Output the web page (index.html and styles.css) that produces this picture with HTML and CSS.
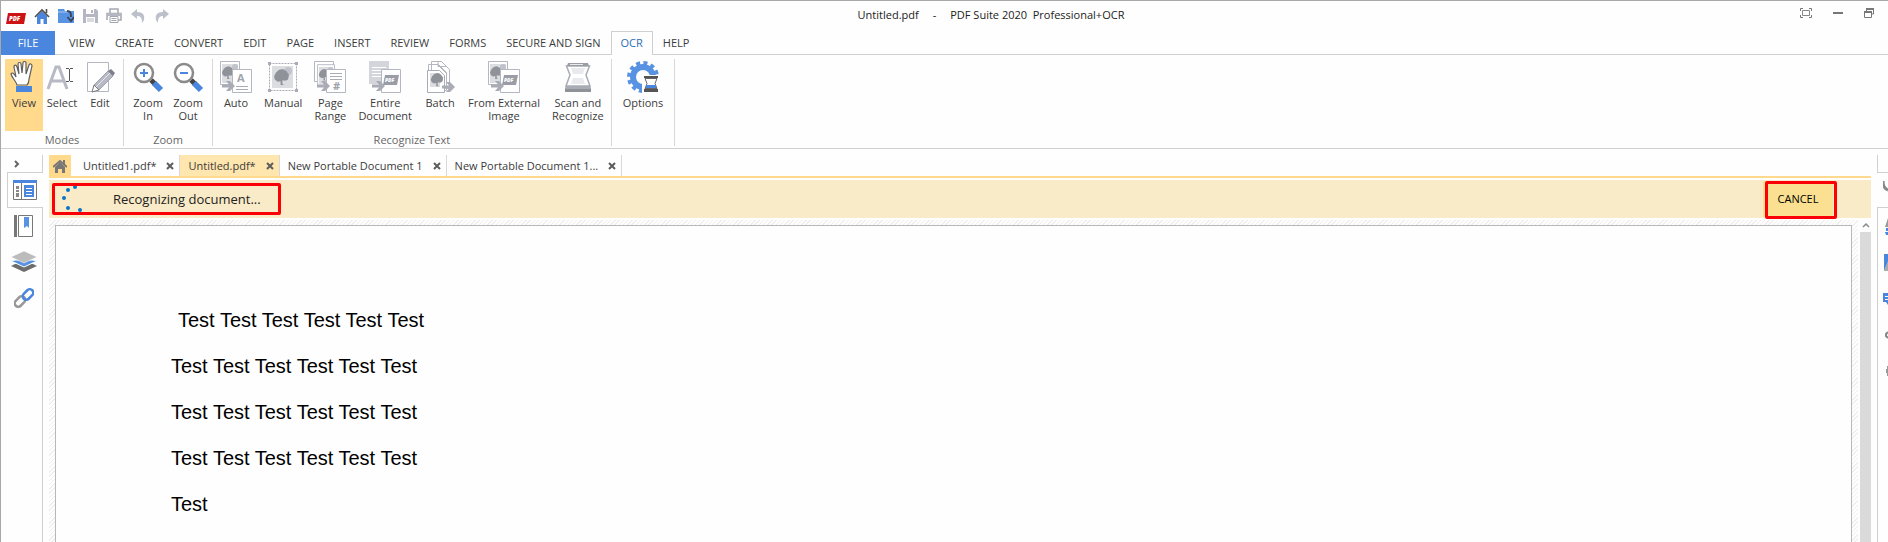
FILE: index.html
```html
<!DOCTYPE html>
<html lang="en">
<head>
    <meta charset="UTF-8">
    <meta name="viewport" content="width=device-width, initial-scale=1.0">
    <title>Untitled.pdf - PDF Suite 2020 Professional+OCR</title>
    <link rel="stylesheet" href="styles.css">
</head>
<body>

    <!-- shared icon parts -->
    <svg class="defs" width="0" height="0" aria-hidden="true">
        <symbol id="tree" viewBox="0 0 16 18">
            <path d="M7 17v-4l-3 .5-3-2L0 8l2-4 3-3 4-1 4 2 3 4-1 5-3 1.500-3-.5v4l2 1H5z" fill="#8f9299"/>
        </symbol>
        <symbol id="arrow" viewBox="0 0 13 10">
            <path d="M0 3.500h7L4 0h4l5 5-5 5H4l3-3.500H0z" fill="#a9acb5"/>
        </symbol>
        <symbol id="pdfpage" viewBox="0 0 20 24">
            <path d="M.5.5h19v23H.5z" fill="#fff" stroke="#b4b7c1"/>
            <path d="M4 6h14l-2 10H2z" fill="#9a9da6"/>
            <text x="4" y="13" class="pdf-mark">PDF</text>
        </symbol>
        <symbol id="picture" viewBox="0 0 20 24">
            <path d="M.5.5h19v23H.5z" fill="#fff" stroke="#b4b7c1"/>
            <path d="M2 3h16v19H2z" fill="#dcdde1"/>
            <circle cx="15" cy="6" r="3" fill="#c0c3cc"/>
            <use href="#tree" x="2" y="4" width="12" height="16"/>
        </symbol>
    </svg>

    <header class="titlebar">
        <div class="quick">
            <svg class="logo" width="20" height="12" viewBox="0 0 20 12">
                <path d="M2 1h18l-2 11H0z" fill="#cc1414"/>
                <text x="3" y="9" class="logo-text">PDF</text>
            </svg>
            <button class="quick-btn" aria-label="Home">
                <svg width="16" height="16" viewBox="0 0 16 16">
                    <path d="M3 8l5-5 5 5v8H9.500v-5h-3v5H3z" fill="#4a86dd"/>
                    <path d="M1 9l7-7 7 7M12.500 1v4" fill="none" stroke="#4e4e4e" stroke-width="1.600"/>
                </svg>
            </button>
            <button class="quick-btn" aria-label="Open">
                <svg width="16" height="16" viewBox="0 0 16 16">
                    <path d="M0 1h6l1 2h9v12H0z" fill="#5793e2"/>
                    <path d="M0 4h10" stroke="#a9c8f2"/>
                    <path d="M9 3c3 0 4 1 4 6" fill="none" stroke="#3c4453" stroke-width="1.800"/>
                    <path d="M9.500 9l3.500 4 3-4" fill="none" stroke="#3c4453" stroke-width="1.800"/>
                </svg>
            </button>
            <button class="quick-btn" aria-label="Save">
                <svg width="16" height="16" viewBox="0 0 16 16">
                    <path d="M1 1h13l2 2v12H1z" fill="#b4b6c1"/>
                    <path d="M4 1h8v5H4zM4 9h9v6H4z" fill="#fff"/>
                    <path d="M9 2h2v3H9zM5 10.500h7v1H5zM5 12.500h7v1H5z" fill="#b4b6c1"/>
                </svg>
            </button>
            <button class="quick-btn" aria-label="Print">
                <svg width="16" height="16" viewBox="0 0 16 16">
                    <path d="M4 5V1h8v4M1 12V5.500h14V12h-3" fill="none" stroke="#a6a8b1" stroke-width="1.500"/>
                    <path d="M1 5h14v3H1z" fill="#b4b6c1"/>
                    <path d="M4 8.500h8v6H4z" fill="#fff" stroke="#a6a8b1"/>
                    <path d="M5.500 10.500h5M5.500 12.500h5" stroke="#a6a8b1"/>
                </svg>
            </button>
            <button class="quick-btn" aria-label="Undo">
                <svg width="16" height="16" viewBox="0 0 16 16">
                    <path d="M1 6l6-5v3c6 0 8 3 7 8l-2 3c0-5-1-7-5-7v3z" fill="#bcc0ca"/>
                </svg>
            </button>
            <button class="quick-btn" aria-label="Redo">
                <svg width="16" height="16" viewBox="0 0 16 16">
                    <path d="M15 6L9 1v3C3 4 1 7 2 12l2 3c0-5 1-7 5-7v3z" fill="#bcc0ca"/>
                </svg>
            </button>
        </div>
        <h1 class="title"><span>Untitled.pdf</span><span>-</span><span>PDF Suite 2020&nbsp; Professional+OCR</span></h1>
        <div class="window-btns">
            <button aria-label="Full screen">
                <svg width="12" height="10" viewBox="0 0 12 10">
                    <path d="M.5 3V.5H3M9 .5h2.500V3M11.500 7v2.500H9M3 9.500H.5V7" fill="none" stroke="#777"/>
                    <path d="M2.500 2.500h7v5h-7z" fill="#fff" stroke="#888"/>
                </svg>
            </button>
            <button aria-label="Minimize">
                <svg width="10" height="10" viewBox="0 0 10 10"><path d="M0 4h10v2H0z" fill="#777"/></svg>
            </button>
            <button aria-label="Restore">
                <svg width="10" height="10" viewBox="0 0 10 10">
                    <path d="M2.500 3V1h7v5H8" fill="none" stroke="#777"/>
                    <path d="M2 0h8v2H2z" fill="#777"/>
                    <path d="M.5 4h7v5.500h-7z" fill="#fff" stroke="#777"/>
                    <path d="M0 3h8v2H0z" fill="#777"/>
                </svg>
            </button>
        </div>
    </header>

    <nav class="menu">
        <button class="file">FILE</button>
        <button>VIEW</button>
        <button>CREATE</button>
        <button>CONVERT</button>
        <button>EDIT</button>
        <button>PAGE</button>
        <button>INSERT</button>
        <button>REVIEW</button>
        <button>FORMS</button>
        <button>SECURE AND SIGN</button>
        <button class="active">OCR</button>
        <button>HELP</button>
    </nav>

    <section class="ribbon">
        <div class="group modes">
            <div class="tools">
                <button class="tool selected">
                    <svg width="32" height="32" viewBox="0 0 32 32">
                        <path d="M9 24c-1-4-5-7-6-11 1-2 3-1 5 3L6 6c0-2 2-3 3 0l2 7-1-10c0-2 3-2 3 0l1 9 1-10c0-2 3-2 3 0v11l3-9c1-2 3-1 3 1l-3 13c0 3-1 5-2 6z" fill="#fff" stroke="#5f5f5f" stroke-width="1.200"/>
                        <path d="M8 25h16v6H8z" fill="#4a86dd"/>
                    </svg>
                    View
                </button>
                <button class="tool">
                    <svg width="32" height="32" viewBox="0 0 32 32">
                        <path d="M2 28L10 6h3l8 22M5 20h13" fill="none" stroke="#b7bac4" stroke-width="3"/>
                        <path d="M20 7.500h3M24 7.500h3M23.500 8v12M20 20.500h3M24 20.500h3" stroke="#555"/>
                    </svg>
                    Select
                </button>
                <button class="tool">
                    <svg width="32" height="32" viewBox="0 0 32 32">
                        <path d="M3.500 1.500h21v29h-21z" fill="#fff" stroke="#b4b7c1"/>
                        <path d="M10 24L24 10l5 5-14 14z" fill="#b7bac4" stroke="#9fa2ac"/>
                        <path d="M12 26l14-14" stroke="#e8e9ed"/>
                        <path d="M24 10l3-2 4 4-2 3z" fill="#7d8088"/>
                        <path d="M10 24l5 5-7 2z" fill="#fff" stroke="#777"/>
                    </svg>
                    Edit
                </button>
            </div>
            <div class="caption">Modes</div>
        </div>

        <div class="group zoom">
            <div class="tools">
                <button class="tool">
                    <svg width="32" height="32" viewBox="0 0 32 32">
                        <path d="M19 19l4 4" stroke="#444" stroke-width="5"/>
                        <path d="M22 22l7 7" stroke="#4a86dd" stroke-width="6"/>
                        <circle cx="12" cy="12" r="9" fill="#fff" stroke="#8a8a8a" stroke-width="2.500"/>
                        <path d="M8 12h8M12 8v8" stroke="#4a86dd" stroke-width="2"/>
                    </svg>
                    Zoom<br>In
                </button>
                <button class="tool">
                    <svg width="32" height="32" viewBox="0 0 32 32">
                        <path d="M19 19l4 4" stroke="#444" stroke-width="5"/>
                        <path d="M22 22l7 7" stroke="#4a86dd" stroke-width="6"/>
                        <circle cx="12" cy="12" r="9" fill="#fff" stroke="#8a8a8a" stroke-width="2.500"/>
                        <path d="M8 12h8" stroke="#4a86dd" stroke-width="2"/>
                    </svg>
                    Zoom<br>Out
                </button>
            </div>
            <div class="caption">Zoom</div>
        </div>

        <div class="group recognize">
            <div class="tools">
                <button class="tool">
                    <svg width="32" height="32" viewBox="0 0 32 32">
                        <use href="#picture" x="0" y="0" width="20" height="24"/>
                        <path d="M12.500 8.500h19v23h-19z" fill="#fff" stroke="#b4b7c1"/>
                        <path d="M16 25.500h12M16 28.500h12" stroke="#a9acb5"/>
                        <text x="17" y="21" class="icon-letter">A</text>
                        <use href="#arrow" x="2" y="20" width="13" height="10"/>
                    </svg>
                    Auto
                </button>
                <button class="tool">
                    <svg width="32" height="32" viewBox="0 0 32 32">
                        <path d="M2.500 2.500h27v27h-27z" fill="none" stroke="#a9acb5" stroke-dasharray="2 1"/>
                        <path d="M1 1h3v3H1zM28 1h3v3h-3zM1 28h3v3H1zM28 28h3v3h-3z" fill="#a9acb5"/>
                        <path d="M5 5h21v22H5z" fill="#dcdde1"/>
                        <circle cx="21" cy="10" r="4" fill="#c0c3cc"/>
                        <use href="#tree" x="7" y="8" width="15" height="17"/>
                    </svg>
                    Manual
                </button>
                <button class="tool">
                    <svg width="32" height="32" viewBox="0 0 32 32">
                        <path d="M.5.5h19v20H.5z" fill="#fff" stroke="#b4b7c1"/>
                        <use href="#picture" x="3" y="3" width="18" height="22"/>
                        <path d="M12.500 8.500h19v23h-19z" fill="#fff" stroke="#b4b7c1"/>
                        <path d="M16 12.500h12M16 15.500h12M16 18.500h12" stroke="#a9acb5"/>
                        <text x="19" y="29" class="icon-letter">#</text>
                        <use href="#arrow" x="3" y="20" width="13" height="10"/>
                    </svg>
                    Page<br>Range
                </button>
                <button class="tool">
                    <svg width="32" height="32" viewBox="0 0 32 32">
                        <path d="M0 0h20v23H0z" fill="#d3d5db"/>
                        <path d="M3 6.500h14M3 9.500h14M3 12.500h9M3 15.500h9" stroke="#fff"/>
                        <use href="#pdfpage" x="12" y="8" width="20" height="24"/>
                        <use href="#arrow" x="3" y="20" width="13" height="10"/>
                    </svg>
                    Entire<br>Document
                </button>
                <button class="tool">
                    <svg width="32" height="32" viewBox="0 0 32 32">
                        <path d="M7.500.5h10l8 8v19h-18zM4.500 3.500h10l8 8v18h-18z" fill="#fff" stroke="#b4b7c1"/>
                        <path d="M14 .5v5h9M14 4l8 8" fill="none" stroke="#b4b7c1"/>
                        <path d="M3.500 9.500h12l5 5v17h-17z" fill="#fff" stroke="#a9acb5"/>
                        <path d="M6 12h10v14H6z" fill="#dcdde1"/>
                        <use href="#tree" x="6" y="12" width="14" height="14"/>
                        <use href="#arrow" x="18" y="21" width="13" height="10"/>
                    </svg>
                    Batch
                </button>
                <button class="tool">
                    <svg width="32" height="32" viewBox="0 0 32 32">
                        <use href="#picture" x="0" y="0" width="20" height="24"/>
                        <use href="#pdfpage" x="12" y="8" width="20" height="24"/>
                        <use href="#arrow" x="3" y="20" width="13" height="10"/>
                    </svg>
                    From External<br>Image
                </button>
                <button class="tool">
                    <svg width="32" height="32" viewBox="0 0 32 32">
                        <path d="M4.500 5h23L24 14l4 11H4l4-11z" fill="#fff" stroke="#a9acb5" stroke-width="1.500"/>
                        <path d="M9 7h14l-2 6H11zM11 17h10l2 6H9z" fill="#e9eaed"/>
                        <path d="M6 2h20l1 3H5z" fill="#9a9da6"/>
                        <path d="M8 3.500h13" stroke="#e9eaed"/>
                        <path d="M4 25h24l1 2v4H3v-4z" fill="#a9acb5"/>
                        <path d="M3 28h26v3H3z" fill="#8f9299"/>
                    </svg>
                    Scan and<br>Recognize
                </button>
            </div>
            <div class="caption">Recognize Text</div>
        </div>

        <div class="group options">
            <div class="tools">
                <button class="tool">
                    <svg width="32" height="32" viewBox="0 0 32 32">
                        <circle cx="16" cy="16" r="14" fill="none" stroke="#5793e2" stroke-width="4" stroke-dasharray="4 3.330"/>
                        <circle cx="16" cy="16" r="10" fill="none" stroke="#5793e2" stroke-width="6"/>
                        <path d="M15 14h17v18H15z" fill="#fff"/>
                        <path d="M18 17.500h12l-2 5 2 5H18l2-5z" fill="#fff" stroke="#666"/>
                        <path d="M19 24h10v3H19z" fill="#4a86dd"/>
                        <path d="M17 15h14v2H17zM17 28h14v3H17z" fill="#555"/>
                    </svg>
                    Options
                </button>
            </div>
        </div>
    </section>

    <div class="workspace">
        <aside class="sidebar">
            <button class="expand" aria-label="Expand panel">
                <svg width="6" height="8" viewBox="0 0 6 8"><path d="M1 1l3 3-3 3" fill="none" stroke="#666" stroke-width="2"/></svg>
            </button>
            <button class="side-btn active" aria-label="Pages">
                <svg width="24" height="20" viewBox="0 0 24 20">
                    <path d="M.5.5h23v19H.5z" fill="#fff" stroke="#777"/>
                    <path d="M0 0h24v3H0z" fill="#4a86dd"/>
                    <path d="M8.500 3v16" stroke="#777"/>
                    <path d="M3 6h3v3H3zM3 10h3v2H3zM3 13h3v4H3z" fill="#888"/>
                    <path d="M11 5h10v12H11z" fill="#4a86dd"/>
                    <path d="M13 8.500h6M13 11.500h6M13 14.500h6" stroke="#fff"/>
                </svg>
            </button>
            <button class="side-btn" aria-label="Bookmarks">
                <svg width="20" height="22" viewBox="0 0 20 22">
                    <path d="M0 0h3v22H0z" fill="#777"/>
                    <path d="M4.500.5h14v21h-14z" fill="#fff" stroke="#777"/>
                    <path d="M10 2h5v11l-2-2-3 2z" fill="#5793e2"/>
                </svg>
            </button>
            <button class="side-btn" aria-label="Layers">
                <svg width="26" height="22" viewBox="0 0 26 22">
                    <path d="M0 15l4-2h18l4 2-13 6z" fill="#6d6d6d"/>
                    <path d="M0 10l4-1h18l4 1-13 6z" fill="#5793e2" stroke="#fff"/>
                    <path d="M0 6l13-6 13 6-13 6z" fill="#bcbcbc" stroke="#fff" stroke-width=".5"/>
                </svg>
            </button>
            <button class="side-btn" aria-label="Attachments">
                <svg width="20" height="20" viewBox="0 0 20 20">
                    <rect x="0" y="10" width="12" height="7" rx="3.500" transform="rotate(-45 6 13.500)" fill="none" stroke="#999" stroke-width="2.500"/>
                    <rect x="8" y="3" width="12" height="7" rx="3.500" transform="rotate(-45 14 6.500)" fill="none" stroke="#4a86dd" stroke-width="2.500"/>
                </svg>
            </button>
        </aside>

        <main class="main">
            <div class="doc-tabs">
                <button class="home-tab" aria-label="Start page">
                    <svg width="14" height="14" viewBox="0 0 14 14">
                        <path d="M2 8l5-5 5 5v6H9v-4H5v4H2z" fill="#777"/>
                        <path d="M0 8l7-6 7 6M11 1v4" fill="none" stroke="#777" stroke-width="2"/>
                    </svg>
                </button>
                <div class="doc-tab"><span>Untitled1.pdf*</span><button class="close" aria-label="Close"><svg width="8" height="8" viewBox="0 0 8 8"><path d="M1 1l6 6M7 1L1 7"/></svg></button></div>
                <div class="doc-tab active"><span>Untitled.pdf*</span><button class="close" aria-label="Close"><svg width="8" height="8" viewBox="0 0 8 8"><path d="M1 1l6 6M7 1L1 7"/></svg></button></div>
                <div class="doc-tab"><span>New Portable Document 1</span><button class="close" aria-label="Close"><svg width="8" height="8" viewBox="0 0 8 8"><path d="M1 1l6 6M7 1L1 7"/></svg></button></div>
                <div class="doc-tab"><span>New Portable Document 1...</span><button class="close" aria-label="Close"><svg width="8" height="8" viewBox="0 0 8 8"><path d="M1 1l6 6M7 1L1 7"/></svg></button></div>
            </div>

            <div class="progress">
                <div class="status">
                    <svg width="24" height="26" viewBox="0 0 24 26" fill="#0a74c4">
                        <circle cx="14" cy="1" r="2"/>
                        <circle cx="7" cy="4" r="2"/>
                        <circle cx="3" cy="12" r="2"/>
                        <circle cx="7" cy="22" r="2"/>
                        <circle cx="19" cy="24" r="2"/>
                    </svg>
                    <span>Recognizing document...</span>
                </div>
                <button class="cancel">CANCEL</button>
            </div>

            <div class="viewer">
                <div class="canvas">
                    <article class="paper">
                        <p class="indent">Test Test Test Test Test Test</p>
                        <p>Test Test Test Test Test Test</p>
                        <p>Test Test Test Test Test Test</p>
                        <p>Test Test Test Test Test Test</p>
                        <p>Test</p>
                    </article>
                </div>
                <div class="scrollbar">
                    <svg width="11" height="12" viewBox="0 0 11 12"><path d="M3 7l3-3 3 3" fill="none" stroke="#888" stroke-width="1.500"/></svg>
                    <div class="thumb"></div>
                </div>
            </div>
        </main>

        <aside class="right-panel">
            <div class="right-top"></div>
            <div class="right-active">
                <svg width="5" height="12" viewBox="0 0 5 12"><path d="M0 1c0 5 2 8 5 9" fill="none" stroke="#888" stroke-width="3"/></svg>
            </div>
            <div class="right-list">
                <div class="right-item"><svg width="4" height="18" viewBox="0 0 4 18"><path d="M4 0L1 9h3z" fill="#999"/><path d="M2 10h2v3H2zM1 14h3v3H2z" fill="#4a86dd"/></svg></div>
                <div class="right-item"><svg width="4" height="18" viewBox="0 0 4 18"><path d="M0 0h4v8L0 17z" fill="#4a86dd"/><path d="M4 7v10H0z" fill="#aaa"/></svg></div>
                <div class="right-item"><svg width="5" height="12" viewBox="0 0 5 12"><path d="M0 0h5v12L3 9H0z" fill="#4a86dd"/><path d="M2 3.500h3M2 6.500h3" stroke="#fff"/></svg></div>
                <div class="right-item"><svg width="3" height="8" viewBox="0 0 3 8"><path d="M3 1L1 3v2l2 2" fill="none" stroke="#888" stroke-width="2"/></svg></div>
                <div class="right-item"><svg width="2" height="10" viewBox="0 0 2 10"><path d="M1 0h1v10H1V7H0V3h1z" fill="#999"/></svg></div>
            </div>
        </aside>
    </div>

</body>
</html>
```

FILE: styles.css
```css
* {
    box-sizing: border-box;
}

body {
    margin: 0;
    height: 100vh;
    display: flex;
    flex-direction: column;
    overflow: hidden;
    border-top: 1px solid #a8a8a8;
    border-left: 1px solid #a8a8a8;
    background: #fefefe;
    font-family: "Open Sans", "Noto Sans", sans-serif;
    font-size: 11px;
    color: #3c3c3c;
}

button {
    margin: 0;
    padding: 0;
    border: none;
    background: none;
    font: inherit;
    color: inherit;
    cursor: pointer;
}

svg {
    display: block;
    flex: none;
}

.defs {
    position: absolute;
}

/* Title bar */
.titlebar {
    display: flex;
    justify-content: space-between;
    align-items: center;
    height: 30px;
    flex: none;
    padding: 0 14px 0 5px;
}

.quick {
    display: flex;
    align-items: center;
    gap: 8px;
}

.logo {
    margin-top: 4px;
    overflow: visible;
}

.logo-text {
    font-size: 6px;
    font-weight: 800;
    font-style: italic;
    fill: #fff;
}

.title {
    display: flex;
    gap: 14px;
    margin: 0 0 4px 12px;
    font-size: 11px;
    font-weight: normal;
    color: #222;
}

.window-btns {
    display: flex;
    align-items: center;
    gap: 21px;
    padding-bottom: 6px;
}

/* Menu */
.menu {
    display: flex;
    height: 24px;
    flex: none;
    border-bottom: 1px solid #d0d0d0;
}

.menu button {
    height: 24px;
    padding: 0 10px 2px;
    white-space: nowrap;
}

.menu .file {
    width: 54px;
    margin-right: 4px;
    background: #4a86dd;
    color: #fff;
}

.menu .active {
    border: 1px solid #d0d0d0;
    border-bottom: none;
    padding: 0 9px 2px;
    background: #fefefe;
    color: #2e6db5;
}

/* Ribbon */
.ribbon {
    display: flex;
    flex: none;
    height: 94px;
    padding-top: 4px;
    border-bottom: 1px solid #d0d0d0;
}

.group {
    display: flex;
    flex-direction: column;
    justify-content: space-between;
    height: 87px;
    padding: 0 4px;
    border-right: 1px solid #d8d8d8;
}

.tools {
    display: flex;
    justify-content: center;
}

.tool {
    display: flex;
    flex-direction: column;
    align-items: center;
    height: 72px;
    padding: 2px 3px 0;
    line-height: 13px;
    white-space: nowrap;
}

.tool svg {
    margin-bottom: 3px;
}

.tool.selected {
    background: #ffd98c;
}

.zoom .tool {
    padding: 2px 4px 0;
}

.recognize {
    padding: 0 1px;
}

.recognize .tool {
    padding: 2px 6px 0;
}

.options {
    padding: 0 8px;
}

.caption {
    text-align: center;
    line-height: 13px;
    color: #666;
}

.pdf-mark {
    font-size: 5px;
    font-weight: 800;
    font-style: italic;
    fill: #fff;
}

.icon-letter {
    font-size: 11px;
    font-weight: bold;
    fill: #a0a3ad;
}

/* Workspace */
.workspace {
    display: flex;
    flex: 1;
    min-height: 0;
    padding-top: 6px;
}

.sidebar {
    width: 42px;
    flex: none;
    display: flex;
    flex-direction: column;
    padding-left: 6px;
    background: linear-gradient(#d0d0d0, #d0d0d0) right / 1px 100% no-repeat;
}

.expand {
    height: 17px;
    padding-left: 7px;
}

.side-btn {
    display: flex;
    align-items: center;
    justify-content: center;
    height: 36px;
    padding-right: 2px;
}

.side-btn.active {
    border: 1px solid #d0d0d0;
    border-right: none;
    background: #fefefe;
}

.main {
    flex: 1;
    min-width: 0;
    display: flex;
    flex-direction: column;
    margin-left: 6px;
}

.doc-tabs {
    display: flex;
    flex: none;
    height: 23px;
    border-bottom: 2px solid #ffd98c;
}

.home-tab {
    display: flex;
    align-items: center;
    justify-content: center;
    width: 22px;
    background: #ffd98c;
}

.doc-tab {
    display: flex;
    align-items: center;
    justify-content: space-between;
    gap: 10px;
    padding: 0 5px 0 8px;
    border-right: 1px solid #d8d8d8;
    white-space: nowrap;
}

.home-tab + .doc-tab {
    padding-left: 12px;
}

.doc-tab.active {
    background: #ffe5ae;
}

.close path {
    fill: none;
    stroke: #5c5c5c;
    stroke-width: 2;
}

/* Progress bar */
.progress {
    display: flex;
    justify-content: space-between;
    align-items: center;
    flex: none;
    height: 38px;
    margin-top: 2px;
    padding: 0 38px 0 3px;
    background: #faebc8;
}

.status {
    display: flex;
    align-items: center;
    width: 229px;
    height: 32px;
    padding-left: 6px;
    gap: 28px;
    border: 3px solid #fb0007;
    border-radius: 2px;
    font-size: 13px;
    white-space: nowrap;
    color: #222;
}

.cancel {
    position: relative;
    width: 70px;
    height: 36px;
    padding-bottom: 2px;
    background: #fae090;
    color: #000;
}

.cancel::after {
    content: "";
    position: absolute;
    inset: 0 -4px -2px 2px;
    border: 3px solid #fb0007;
    border-radius: 2px;
}

/* Document */
.viewer {
    display: flex;
    flex: 1;
    min-height: 0;
    margin-top: 2px;
}

.canvas {
    flex: 1;
    padding: 5px 6px 0;
    background: repeating-linear-gradient(135deg, #fefefe 0 1px, #efefef 1px 2px, #fefefe 2px 3px);
}

.paper {
    height: 100%;
    padding: 71px 115px 0;
    overflow: hidden;
    border: 1px solid #b8b8b8;
    border-bottom: none;
    background: #fefefe;
    font-family: "Liberation Sans", sans-serif;
    font-size: 20px;
    line-height: 46px;
    color: #000;
}

.paper p {
    margin: 0;
}

.paper .indent {
    padding-left: 7px;
}

.scrollbar {
    display: flex;
    flex-direction: column;
    width: 11px;
    margin-left: 2px;
}

.thumb {
    flex: 1;
    background: #dadada;
}

/* Right panel */
.right-panel {
    display: flex;
    flex-direction: column;
    width: 11px;
    flex: none;
    margin-left: 6px;
}

.right-top {
    height: 18px;
    border-left: 1px solid #d0d0d0;
    border-bottom: 1px solid #d0d0d0;
}

.right-active {
    height: 34px;
    padding-top: 7px;
}

.right-active svg {
    margin-left: auto;
}

.right-list {
    flex: 1;
    padding-top: 1px;
    border-top: 1px solid #d0d0d0;
    border-left: 1px solid #d0d0d0;
}

.right-item {
    display: flex;
    align-items: center;
    justify-content: flex-end;
    height: 36px;
}
```
